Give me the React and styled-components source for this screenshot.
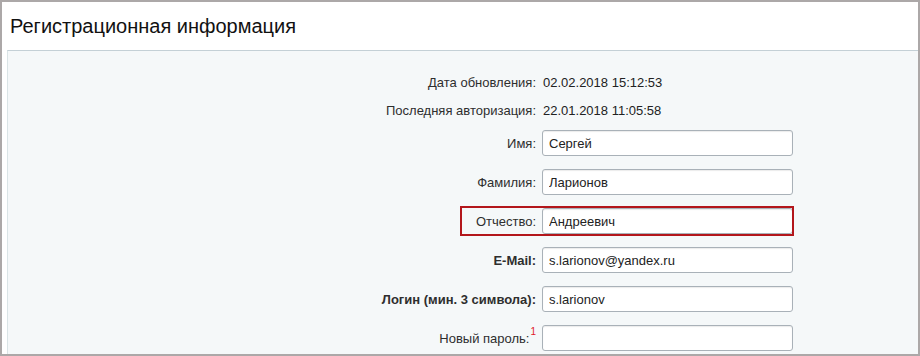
import React from 'react'
import styled, { createGlobalStyle } from 'styled-components'

const GlobalStyle = createGlobalStyle`
  html, body {
    margin: 0;
    padding: 0;
    background: #fff;
  }
  body {
    font-family: 'Liberation Sans', Arial, sans-serif;
  }
`

const Frame = styled.div`
  width: 920px;
  height: 356px;
  box-sizing: border-box;
  border: 2px solid #aca8a8;
  background: #fff;
  overflow: hidden;
  display: flex;
  flex-direction: column;
`

const Header = styled.div`
  height: 48px;
  flex-shrink: 0;
  display: flex;
  align-items: center;
  padding-left: 8px;
`

const Title = styled.h1`
  margin: 0;
  font-size: 20px;
  font-weight: normal;
  color: #111;
`

const Panel = styled.div`
  flex: 1;
  margin-left: 5px;
  background: #f5f8f9;
  border-top: 1px solid #c4d0d6;
  border-left: 1px solid #dae4e6;
  padding-top: 21px;
  display: flex;
  flex-direction: column;
`

const InfoList = styled.div`
  display: flex;
  flex-direction: column;
  gap: 8px;
  margin-bottom: 10px;
`

const FieldList = styled.div`
  display: flex;
  flex-direction: column;
  gap: 13px;
`

const Row = styled.div`
  position: relative;
  display: flex;
  align-items: center;
  height: ${p => (p.$info ? '20px' : '26px')};
  font-size: 13px;
`

const Label = styled.div`
  width: 528px;
  flex-shrink: 0;
  text-align: right;
  color: #2e2e2e;
  font-weight: ${p => (p.$bold ? 'bold' : 'normal')};
  margin-right: 6px;
  white-space: nowrap;
`

const Value = styled.div`
  color: #222;
  padding-left: 1px;
`

const Input = styled.input`
  width: 251px;
  height: 26px;
  box-sizing: border-box;
  border: 1px solid #a9b1b8;
  border-radius: 3px;
  background: #fff;
  box-shadow: inset 0 1px 1px rgba(0, 0, 0, 0.08);
  padding: 0 6px;
  font-family: 'Liberation Sans', Arial, sans-serif;
  font-size: 13px;
  color: #222;
  outline: none;
`

const Sup = styled.sup`
  color: #e0202a;
  font-size: 10px;
  line-height: 1;
  vertical-align: top;
  position: relative;
  top: -4px;
  margin-left: 1px;
`

const Highlight = styled.div`
  position: absolute;
  left: 452px;
  top: -2px;
  width: 334px;
  height: 30px;
  box-sizing: border-box;
  border: 2px solid #b3161b;
  pointer-events: none;
`

const info = [
  { label: 'Дата обновления:', value: '02.02.2018 15:12:53' },
  { label: 'Последняя авторизация:', value: '22.01.2018 11:05:58' },
]

const fields = [
  { label: 'Имя:', value: 'Сергей' },
  { label: 'Фамилия:', value: 'Ларионов' },
  { label: 'Отчество:', value: 'Андреевич', marked: true },
  { label: 'E-Mail:', value: 's.larionov@yandex.ru', bold: true },
  { label: 'Логин (мин. 3 символа):', value: 's.larionov', bold: true },
  { label: 'Новый пароль:', value: '', note: '1', type: 'password' },
]

export default function App() {
  return (
    <>
      <GlobalStyle />
      <Frame>
        <Header>
          <Title>Регистрационная информация</Title>
        </Header>
        <Panel>
          <InfoList>
            {info.map(item => (
              <Row $info key={item.label}>
                <Label>{item.label}</Label>
                <Value>{item.value}</Value>
              </Row>
            ))}
          </InfoList>
          <FieldList>
            {fields.map(item => (
              <Row key={item.label}>
                <Label $bold={item.bold}>
                  {item.label}
                  {item.note && <Sup>{item.note}</Sup>}
                </Label>
                <Input type={item.type || 'text'} defaultValue={item.value} readOnly />
                {item.marked && <Highlight />}
              </Row>
            ))}
          </FieldList>
        </Panel>
      </Frame>
    </>
  )
}
